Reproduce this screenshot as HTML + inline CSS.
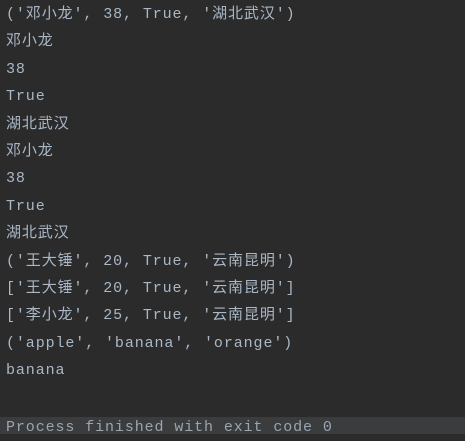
<!DOCTYPE html>
<html><head><meta charset="utf-8"><style>
html,body{margin:0;padding:0;background:#2b2b2b;width:465px;height:434px;overflow:hidden}
.l{position:absolute;left:6px;height:27px;line-height:27px;font-family:"Liberation Mono","Noto Sans CJK SC",monospace;font-size:15px;letter-spacing:0.9px;color:#a9b7c6;white-space:pre}
.last{position:absolute;left:0;top:417px;width:465px;height:17px;background:#3a3c3e}
</style></head><body>
<div class="last"></div>
<div class="l" style="top:1px">('邓小龙', 38, True, '湖北武汉')</div>
<div class="l" style="top:28.4px">邓小龙</div>
<div class="l" style="top:55.8px">38</div>
<div class="l" style="top:83.2px">True</div>
<div class="l" style="top:110.6px">湖北武汉</div>
<div class="l" style="top:138px">邓小龙</div>
<div class="l" style="top:165.4px">38</div>
<div class="l" style="top:192.8px">True</div>
<div class="l" style="top:220.2px">湖北武汉</div>
<div class="l" style="top:247.6px">('王大锤', 20, True, '云南昆明')</div>
<div class="l" style="top:275px">['王大锤', 20, True, '云南昆明']</div>
<div class="l" style="top:302.4px">['李小龙', 25, True, '云南昆明']</div>
<div class="l" style="top:329.8px">('apple', 'banana', 'orange')</div>
<div class="l" style="top:357.2px">banana</div>
<div class="l" style="top:414px;color:#9aa5b0">Process finished with exit code 0</div>
</body></html>
